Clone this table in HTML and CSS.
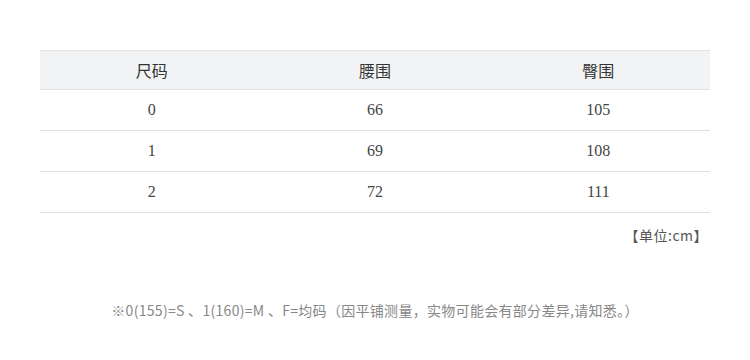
FILE: index.html
```html
<!DOCTYPE html>
<html lang="zh">
<head>
<meta charset="utf-8">
<link rel="stylesheet" href="styles.css">
</head>
<body>
<div class="wrap">
  <table class="size">
    <thead>
      <tr><th>尺码</th><th>腰围</th><th>臀围</th></tr>
    </thead>
    <tbody>
      <tr><td>0</td><td>66</td><td>105</td></tr>
      <tr><td>1</td><td>69</td><td>108</td></tr>
      <tr><td>2</td><td>72</td><td>111</td></tr>
    </tbody>
  </table>
  <div class="unit">【单位:cm】</div>
  <p class="note">※0(155)=S 、1(160)=M 、F=均码（因平铺测量，实物可能会有部分差异,请知悉。）</p>
</div>
</body>
</html>
```
FILE: styles.css
```css
html, body { margin: 0; padding: 0; background: #fff; }
.wrap { width: 670px; margin: 0 auto; padding-top: 50px; }
.size { width: 100%; border-collapse: collapse; table-layout: fixed; }
.size th {
  height: 38px; background: #f2f3f4; border-top: 1px solid #e4e4e4; border-bottom: 1px solid #e0e0e0;
  font: 400 16px "Noto Sans CJK SC", "Noto Sans", sans-serif; color: #333; padding: 0; text-align: center;
}
.size td {
  height: 40px; border-bottom: 1px solid #e0e0e0; padding: 0; text-align: center;
  font: 400 16px "Liberation Serif", serif; color: #444;
}
.unit {
  text-align: right; padding: 12px 2px 0 0; letter-spacing: 0.5px;
  font: 400 14px "Noto Sans CJK SC", sans-serif; color: #555; line-height: 20px;
}
.note {
  margin: 55px 0 0; text-align: center; letter-spacing: 0.3px;
  font: 400 14px "Noto Sans CJK SC", sans-serif; color: #888; line-height: 20px;
}
```
